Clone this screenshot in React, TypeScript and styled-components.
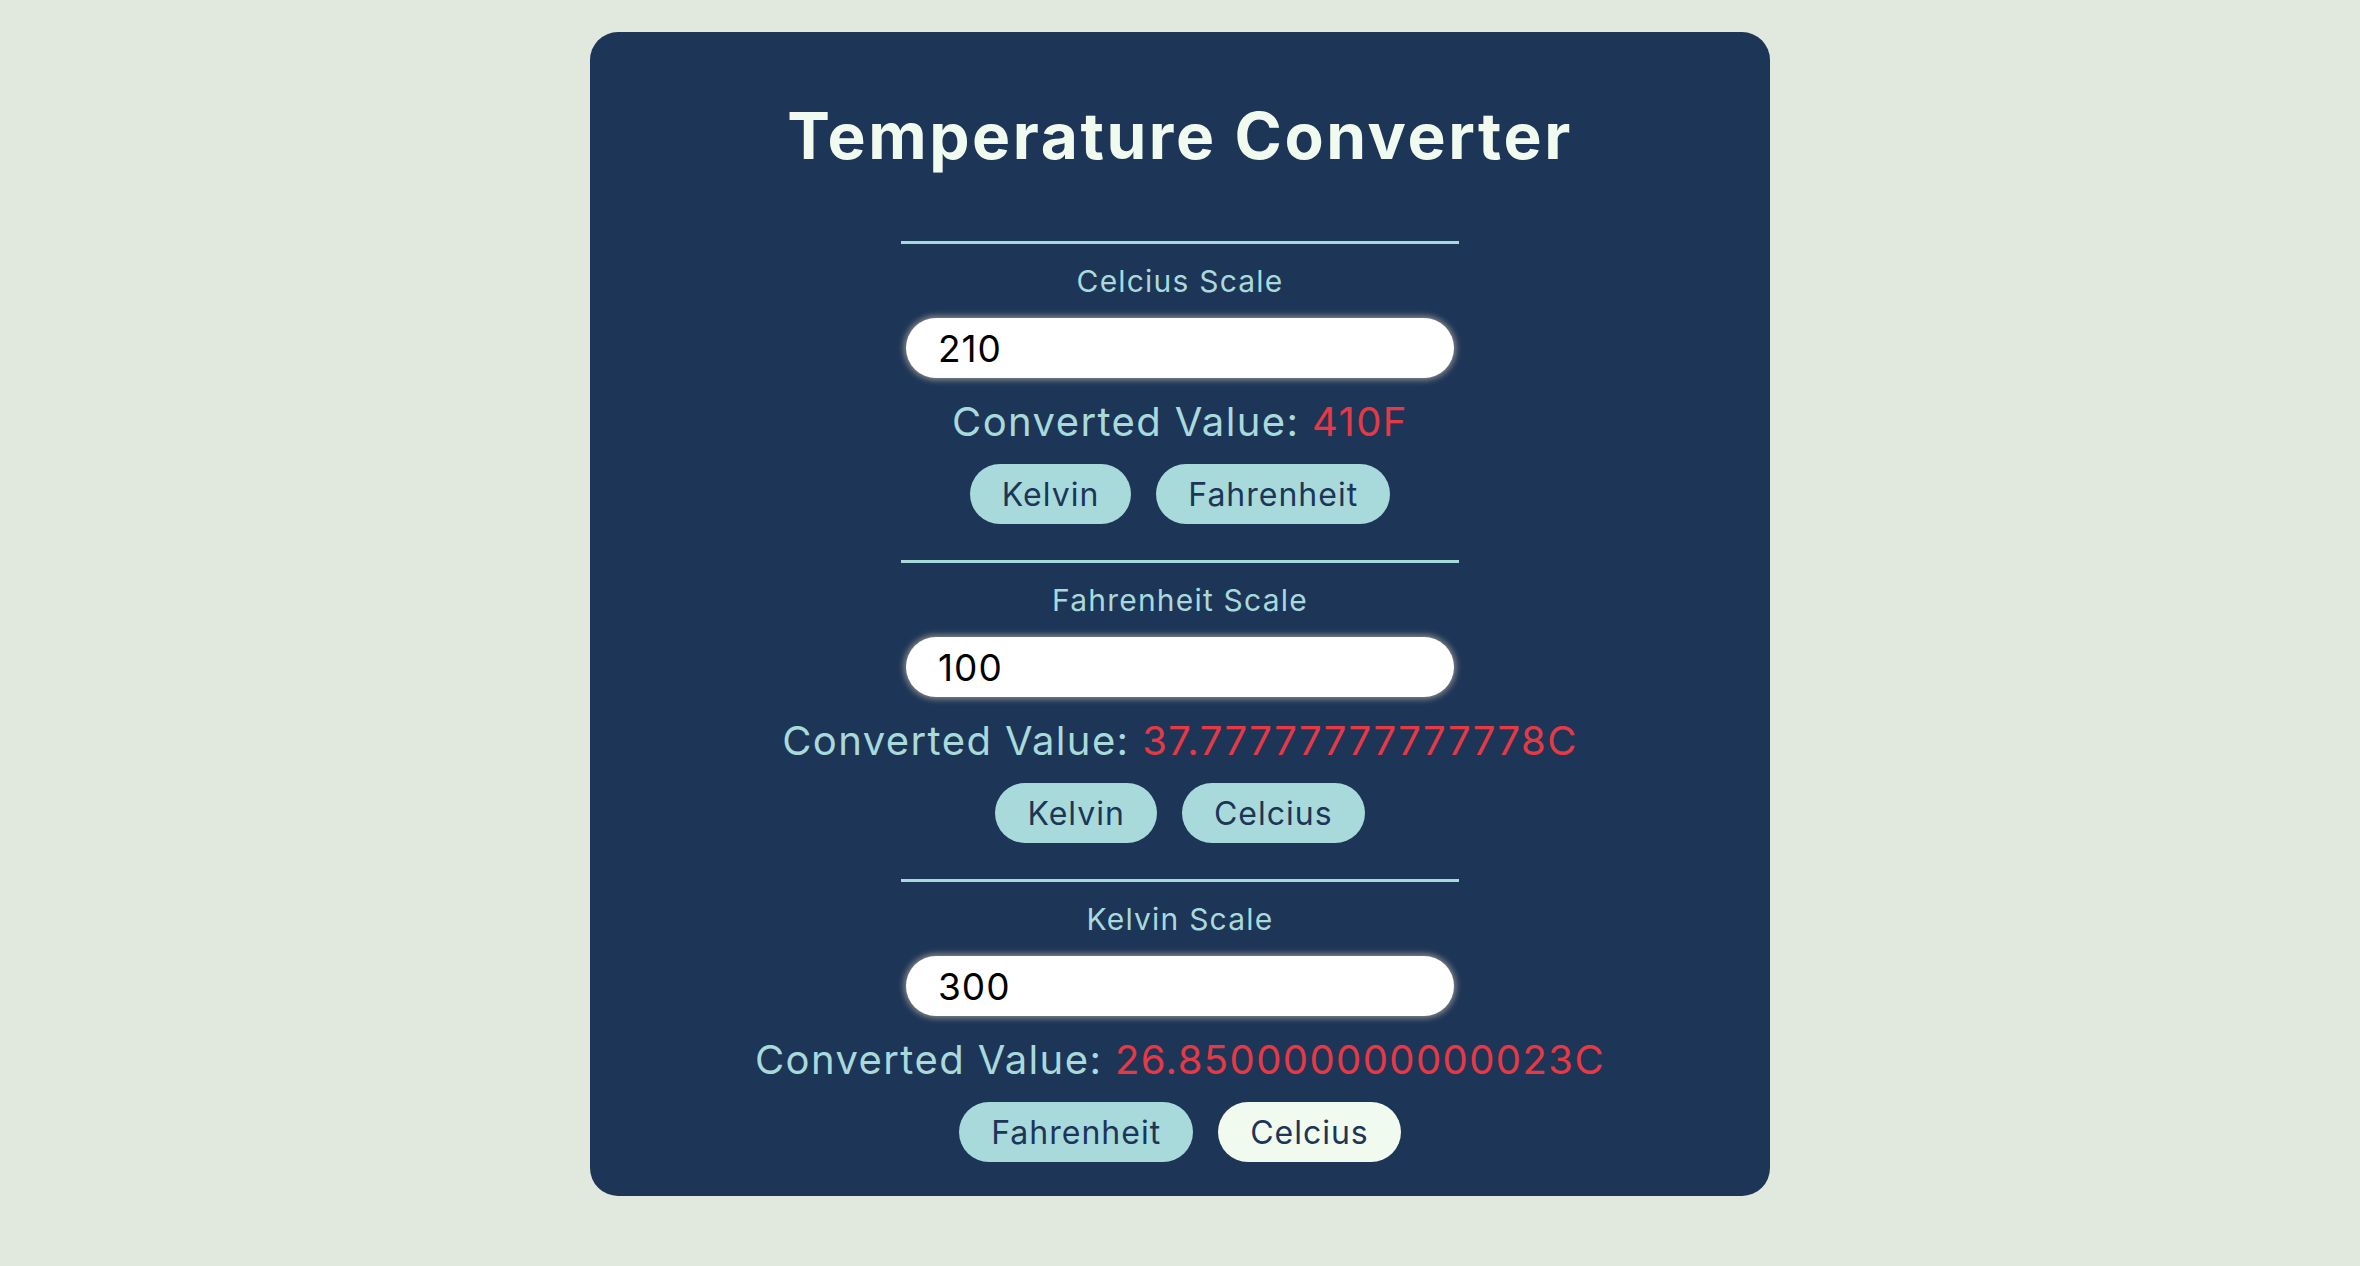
import React, { FC, useState } from 'react';
import styled, { createGlobalStyle } from 'styled-components';

const GlobalStyle = createGlobalStyle`
  html, body {
    margin: 0;
    padding: 0;
    background: #e1e8de;
    font-family: Inter, "Open Sans", sans-serif;
  }
`;

const Page = styled.div`
  display: flex;
  justify-content: center;
  align-items: flex-start;
  padding-top: 32px;
  min-height: 1266px;
  box-sizing: border-box;
`;

const Card = styled.div`
  width: 1180px;
  box-sizing: border-box;
  background: #1d3557;
  border-radius: 28px;
  padding: 72px 0 34px;
  display: flex;
  flex-direction: column;
  align-items: center;
`;

const Title = styled.h1`
  margin: 0 0 73px;
  font-size: 64px;
  line-height: 64px;
  font-weight: 700;
  letter-spacing: 2.6px;
  color: #f1faee;
`;

const Section = styled.section`
  display: flex;
  flex-direction: column;
  align-items: center;
  & + & {
    margin-top: 36px;
  }
`;

const Divider = styled.hr`
  width: 558px;
  height: 3px;
  margin: 0 0 22px;
  border: none;
  background: #a8dadc;
`;

const Label = styled.label`
  font-size: 30px;
  line-height: 30px;
  letter-spacing: 1.2px;
  color: #a8dadc;
  margin-bottom: 22px;
`;

const Input = styled.input`
  width: 548px;
  height: 60px;
  box-sizing: border-box;
  border: none;
  outline: none;
  border-radius: 30px;
  background: #fff;
  box-shadow: 0 0 6px 2px #8d8d8d;
  padding: 0 32px;
  font-family: inherit;
  font-size: 37px;
  letter-spacing: 1px;
  color: #000;
  margin-bottom: 24px;
`;

const Converted = styled.div`
  font-size: 40px;
  line-height: 40px;
  letter-spacing: 1.4px;
  color: #a8dadc;
  margin-bottom: 22px;
  span {
    color: #e63946;
  }
`;

const Buttons = styled.div`
  display: flex;
  gap: 25px;
`;

const ScaleButton = styled.button<{ $active?: boolean }>`
  height: 60px;
  padding: 0 32px;
  border: none;
  border-radius: 30px;
  background: ${p => (p.$active ? '#f1faee' : '#a8dadc')};
  color: #1d3557;
  font-family: inherit;
  font-size: 32px;
  letter-spacing: 1px;
  cursor: pointer;
`;

interface ScaleProps {
  label: string;
  value: string;
  result: string;
  targets: string[];
  active?: string;
}

const Scale: FC<ScaleProps> = ({ label, value, result, targets, active }) => {
  const [val, setVal] = useState(value);
  return (
    <Section>
      <Divider />
      <Label>{label}</Label>
      <Input value={val} onChange={e => setVal(e.target.value)} />
      <Converted>
        Converted Value: <span>{result}</span>
      </Converted>
      <Buttons>
        {targets.map(t => (
          <ScaleButton key={t} $active={t === active}>
            {t}
          </ScaleButton>
        ))}
      </Buttons>
    </Section>
  );
};

const scales: ScaleProps[] = [
  { label: 'Celcius Scale', value: '210', result: '410F', targets: ['Kelvin', 'Fahrenheit'] },
  { label: 'Fahrenheit Scale', value: '100', result: '37.77777777777778C', targets: ['Kelvin', 'Celcius'] },
  {
    label: 'Kelvin Scale',
    value: '300',
    result: '26.850000000000023C',
    targets: ['Fahrenheit', 'Celcius'],
    active: 'Celcius',
  },
];

const App: FC = () => (
  <>
    <GlobalStyle />
    <Page>
      <Card>
        <Title>Temperature Converter</Title>
        {scales.map(s => (
          <Scale key={s.label} {...s} />
        ))}
      </Card>
    </Page>
  </>
);

export default App;
